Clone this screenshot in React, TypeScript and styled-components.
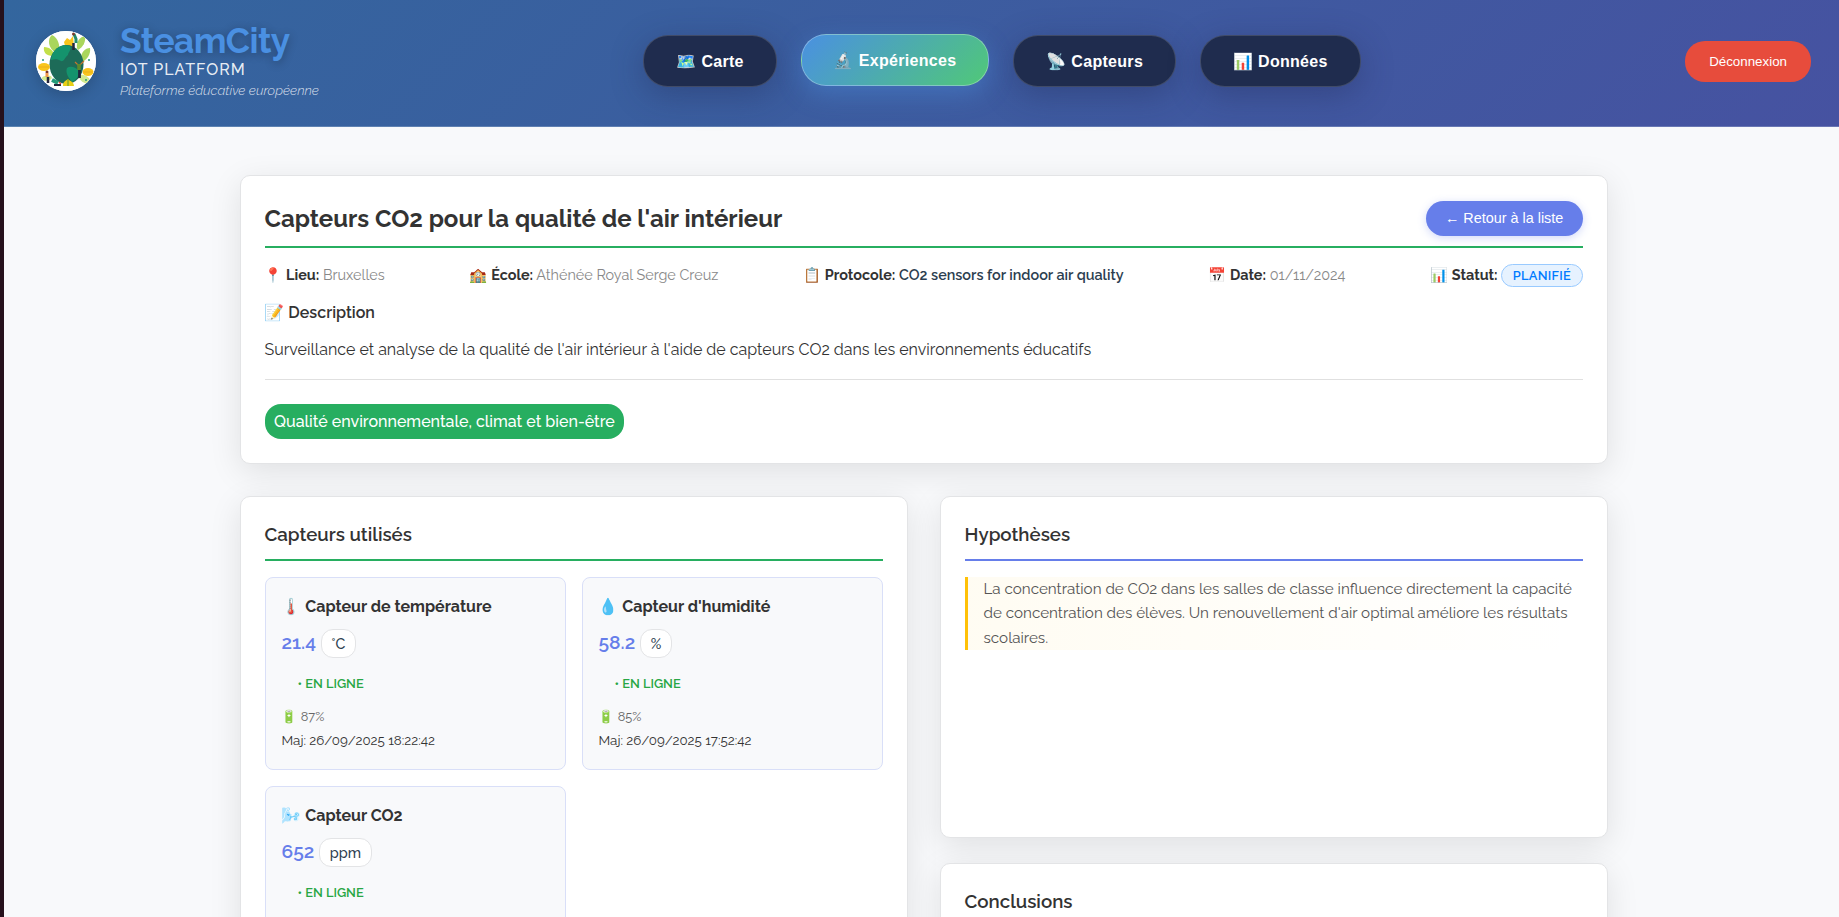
import React from 'react';
import styled, { createGlobalStyle, css } from 'styled-components';

const brandFont = "Raleway, Lato, 'Noto Color Emoji', sans-serif";
const uiFont = "'Liberation Sans', Arial, 'Noto Color Emoji', sans-serif";

const GlobalStyle = createGlobalStyle`
  *, *::before, *::after { box-sizing: border-box; }
  html, body { margin: 0; height: 100%; overflow: hidden; }
  body { font-family: ${brandFont}; font-size: 16px; line-height: 1.6; color: #333; background: #f8f9fa; }
  h1, h2, h3, h4, p { margin: 0; }
`;

const Frame = styled.div`
  display: flex;
  height: 917px;
  width: 100%;
  overflow: hidden;
`;

const EdgeStrip = styled.div`
  flex: 0 0 4px;
  background: #26111c;
`;

const Page = styled.div`
  flex: 0 0 1839px;
  background: #f8f9fb;
`;

const Header = styled.header`
  display: flex;
  align-items: center;
  justify-content: space-between;
  height: 127px;
  padding: 0 32px 4px;
  background: linear-gradient(135deg, #33669e 0%, #4652a1 100%);
  border-bottom: 1px solid rgba(255, 255, 255, 0.2);
`;

const Brand = styled.div`
  display: flex;
  align-items: center;
  gap: 24px;
`;

const LogoDisc = styled.div`
  width: 60px;
  height: 60px;
  border-radius: 50%;
  overflow: hidden;
  background: #fff;
  box-shadow: 0 4px 15px rgba(0, 0, 0, 0.2);

  svg { display: block; }
`;

const BrandText = styled.div`
  display: flex;
  flex-direction: column;
`;

const BrandName = styled.h1`
  padding-top: 1px;
  font-size: 35.2px;
  line-height: 38px;
  font-weight: 700;
  letter-spacing: -0.5px;
  color: #4a90e2;
  text-shadow: 0 2px 10px rgba(0, 0, 0, 0.3);
`;

const BrandSub = styled.span`
  font-size: 16px;
  line-height: 20px;
  font-weight: 500;
  letter-spacing: 1px;
  color: rgba(255, 255, 255, 0.9);
`;

const BrandTagline = styled.span`
  font-size: 13.333px;
  line-height: 21px;
  font-weight: 300;
  font-style: italic;
  color: rgba(255, 255, 255, 0.8);
`;

const Nav = styled.nav`
  display: flex;
  gap: 24px;
`;

const NavButton = styled.button<{ $active?: boolean }>`
  height: 52px;
  padding: 0 32px;
  border: 1px solid rgba(255, 255, 255, 0.15);
  border-radius: 25px;
  background: #1f2c4e;
  color: #fff;
  font: 700 16px ${uiFont};
  letter-spacing: 0.3px;
  box-shadow: 0 8px 32px rgba(31, 38, 80, 0.35);
  ${({ $active }) =>
    $active &&
    css`
      background: linear-gradient(135deg, #4a90e2, #50c878);
      border-color: rgba(255, 255, 255, 0.3);
      box-shadow: 0 8px 25px rgba(74, 144, 226, 0.4);
      transform: translateY(-1px);
    `}
`;

const LogoutButton = styled.button`
  height: 41px;
  margin-top: 1px;
  padding: 0 24px;
  border: 0;
  border-radius: 20px;
  background: #e74c3c;
  color: #fff;
  font: 13.333px ${uiFont};
`;

const Content = styled.main`
  width: 1400px;
  margin: 0 auto;
  padding: 48px 16px 0;
  display: flex;
  flex-direction: column;
  gap: 32px;
`;

const Card = styled.section<{ $minHeight?: number }>`
  padding: 24px;
  min-height: ${({ $minHeight }) => ($minHeight ? `${$minHeight}px` : 'auto')};
  background: #fff;
  border: 1px solid #e3e4e6;
  border-radius: 10px;
  box-shadow: 0 8px 32px rgba(0, 0, 0, 0.1);
`;

const TitleRow = styled.div`
  display: flex;
  align-items: center;
  justify-content: space-between;
  padding-bottom: 8px;
  margin-bottom: 16px;
  border-bottom: 2px solid #27ae60;
`;

const Title = styled.h2`
  font-size: 24px;
  font-weight: 700;
`;

const BackButton = styled.button`
  height: 35px;
  margin-bottom: 2px;
  padding: 0 19.2px;
  border: 0;
  border-radius: 20px;
  background: #667eea;
  color: #fff;
  font: 14.4px ${uiFont};
  box-shadow: 0 2px 8px rgba(102, 126, 234, 0.3);
`;

const MetaRow = styled.div`
  display: flex;
  align-items: center;
  justify-content: space-between;
  height: 21px;
  margin-bottom: 15px;
  font-size: 14.4px;
`;

const MetaItem = styled.div`
  color: #888;

  strong { font-weight: 700; color: #333; }
`;

const ProtocolLink = styled.span`
  font-weight: 600;
  color: #2c3e50;
`;

const StatusBadge = styled.span`
  display: inline-block;
  padding: 0 10.4px;
  border: 1px solid #99caff;
  border-radius: 12px;
  background: #e6f2ff;
  color: #007bff;
  font-size: 12.8px;
  line-height: 21px;
  font-weight: 600;
  letter-spacing: 0.3px;
`;

const DescriptionHeading = styled.h4`
  font-size: 16px;
  font-weight: 600;
  margin-bottom: 11px;
`;

const Description = styled.p`
  padding-bottom: 16px;
  margin-bottom: 24px;
  border-bottom: 1px solid #e0e0e0;
`;

const ThemeTag = styled.span`
  display: block;
  width: fit-content;
  padding: 5.4px 9.6px 4.2px;
  border-radius: 16px;
  background: #27ae60;
  color: #fff;
  font-weight: 500;
`;

const Columns = styled.div`
  display: grid;
  grid-template-columns: 1fr 1fr;
  gap: 32px;
`;

const SideColumn = styled.div`
  display: flex;
  flex-direction: column;
  gap: 25px;
`;

const SectionTitle = styled.h3<{ $line: string }>`
  padding-bottom: 12px;
  margin-bottom: 16px;
  border-bottom: 2px solid ${({ $line }) => $line};
  font-size: 18.72px;
  line-height: 26px;
  font-weight: 600;
`;

const SensorGrid = styled.div`
  display: grid;
  grid-template-columns: 1fr 1fr;
  gap: 16px;
`;

const SensorCard = styled.article`
  height: 193px;
  padding: 16px;
  border: 1px solid #d9dff8;
  border-radius: 8px;
  background: #f8f9fb;
`;

const SensorName = styled.h4`
  font-size: 16px;
  font-weight: 700;
  margin-bottom: 10px;
`;

const Reading = styled.div`
  display: flex;
  align-items: center;
  gap: 5px;
  height: 29px;
  margin-bottom: 16px;
`;

const ReadingValue = styled.span`
  padding-bottom: 4px;
  font-size: 19.2px;
  line-height: 26px;
  font-weight: 600;
  color: #667eea;
`;

const Unit = styled.span`
  height: 29px;
  padding: 0 9.6px;
  border: 1px solid #e3e4e6;
  border-radius: 12px;
  background: #fff;
  color: #2c3e50;
  font-size: 14.4px;
  line-height: 27px;
  font-weight: 500;
`;

const Online = styled.div`
  padding-left: 16px;
  margin-bottom: 12.5px;
  font-size: 12.8px;
  font-weight: 600;
  color: #28a745;
`;

const Battery = styled.div`
  margin-bottom: 2px;
  font-size: 12.8px;
  color: #666;
`;

const Updated = styled.div`
  font-size: 13.333px;
  color: #333;
`;

const Quote = styled.p`
  padding-left: 16px;
  border-left: 3px solid #ffc107;
  background: linear-gradient(90deg, rgba(255, 193, 7, 0.05), rgba(255, 193, 7, 0));
  font-size: 15.2px;
  line-height: 24.5px;
  color: #555;
`;

const sensors = [
  { icon: '🌡️', name: 'Capteur de température', value: '21.4', unit: '°C', battery: '87%', updated: '26/09/2025 18:22:42' },
  { icon: '💧', name: "Capteur d'humidité", value: '58.2', unit: '%', battery: '85%', updated: '26/09/2025 17:52:42' },
  { icon: '🌬️', name: 'Capteur CO2', value: '652', unit: 'ppm' },
];

const Logo = () => (
  <svg width="60" height="60" viewBox="0 0 60 60">
    <rect width="60" height="60" fill="#fff" />
    <g fill="#a9d65c">
      <path d="M20 22C12 17 11 8 16 4C22 7 25 15 22 21Z" />
      <path d="M17 25C10 25 7 21 8 16C14 16 18 20 18 25Z" fill="#c3e04a" />
      <path d="M41 17C40 10 44 6 49 5C50 11 47 16 42 19Z" />
      <path d="M45 28C45 21 49 17 54 17C55 23 51 29 46 31Z" />
      <path d="M44 44C50 43 54 47 55 52C49 54 44 50 43 46Z" fill="#d3ea8e" />
      <path d="M15 45C10 44 6 45 5 48C9 51 14 50 16 47Z" fill="#d3ea8e" />
    </g>
    <path d="M28 11L31 7L34 9L37 5L38 16L29 15Z" fill="#f8c51c" />
    <ellipse cx="30.500" cy="33.500" rx="17" ry="19.500" fill="#1d6b58" />
    <path d="M17 22C21 15 28 13 34 15C36 19 32 21 32 24C29 26 28 31 25 30C22 28 19 28 15 29C15 26 16 24 17 22Z" fill="#14936d" />
    <path d="M31 37C35 34 40 37 44 40C43 45 40 49 36 51C33 47 29 42 31 37Z" fill="#14936d" />
    <ellipse cx="8" cy="36" rx="6" ry="4" fill="#f9c51d" />
    <ellipse cx="52" cy="41" rx="5.500" ry="4" fill="#f9c51d" />
    <path d="M3 36H13M47 41H57" stroke="#e9a91a" strokeWidth="0.800" />
    <path d="M27 55C27 51 29 50 32 48C34 50 38 51 38 55Z" fill="#e9cf16" />
    <path d="M32 48V55" stroke="#5d9c2a" />
    <path d="M38 3L40 8V12" stroke="#238b6b" strokeWidth="3" fill="none" />
    <path d="M37.500 12V19" stroke="#23263d" strokeWidth="2.500" />
    <circle cx="37.500" cy="3" r="1.500" fill="#7c3a2b" />
    <path d="M39 31L43 35L48 30" stroke="#c9732f" strokeWidth="1.200" fill="none" />
    <path d="M43 33V39" stroke="#5c8b2c" strokeWidth="3.500" />
    <path d="M43.500 39V47" stroke="#23263d" strokeWidth="2.800" />
    <circle cx="11" cy="41" r="1.500" fill="#7c3a2b" />
    <path d="M11 42V46" stroke="#f19a4b" strokeWidth="3" />
    <path d="M12 46V52" stroke="#23263d" strokeWidth="2.500" />
    <path d="M16 49L22 52" stroke="#239a78" strokeWidth="4" />
    <path d="M18 54H25" stroke="#23263d" strokeWidth="2" />
    <path d="M23 51L25 53" stroke="#e74c3c" strokeWidth="1.500" />
    <g fill="#239a78">
      <circle cx="7" cy="29" r="1" />
      <circle cx="53" cy="29" r="1" />
      <circle cx="50" cy="49" r="1" />
    </g>
  </svg>
);

export default function App() {
  return (
    <>
      <GlobalStyle />
      <Frame>
        <EdgeStrip />
        <Page>
          <Header>
            <Brand>
              <LogoDisc><Logo /></LogoDisc>
              <BrandText>
                <BrandName>SteamCity</BrandName>
                <BrandSub>IOT PLATFORM</BrandSub>
                <BrandTagline>Plateforme éducative européenne</BrandTagline>
              </BrandText>
            </Brand>
            <Nav>
              <NavButton>🗺️ Carte</NavButton>
              <NavButton $active>🔬 Expériences</NavButton>
              <NavButton>📡 Capteurs</NavButton>
              <NavButton>📊 Données</NavButton>
            </Nav>
            <LogoutButton>Déconnexion</LogoutButton>
          </Header>
          <Content>
            <Card>
              <TitleRow>
                <Title>Capteurs CO2 pour la qualité de l'air intérieur</Title>
                <BackButton>← Retour à la liste</BackButton>
              </TitleRow>
              <MetaRow>
                <MetaItem>📍 <strong>Lieu:</strong> Bruxelles</MetaItem>
                <MetaItem>🏫 <strong>École:</strong> Athénée Royal Serge Creuz</MetaItem>
                <MetaItem>📋 <strong>Protocole:</strong> <ProtocolLink>CO2 sensors for indoor air quality</ProtocolLink></MetaItem>
                <MetaItem>📅 <strong>Date:</strong> 01/11/2024</MetaItem>
                <MetaItem>📊 <strong>Statut:</strong> <StatusBadge>PLANIFIÉ</StatusBadge></MetaItem>
              </MetaRow>
              <DescriptionHeading>📝 Description</DescriptionHeading>
              <Description>
                Surveillance et analyse de la qualité de l'air intérieur à l'aide de capteurs CO2 dans les environnements éducatifs
              </Description>
              <ThemeTag>Qualité environnementale, climat et bien-être</ThemeTag>
            </Card>
            <Columns>
              <Card>
                <SectionTitle $line="#27ae60">Capteurs utilisés</SectionTitle>
                <SensorGrid>
                  {sensors.map((s) => (
                    <SensorCard key={s.name}>
                      <SensorName>{s.icon} {s.name}</SensorName>
                      <Reading>
                        <ReadingValue>{s.value}</ReadingValue>
                        <Unit>{s.unit}</Unit>
                      </Reading>
                      <Online>• EN LIGNE</Online>
                      {s.battery && <Battery>🔋 {s.battery}</Battery>}
                      {s.updated && <Updated>Maj: {s.updated}</Updated>}
                    </SensorCard>
                  ))}
                </SensorGrid>
              </Card>
              <SideColumn>
                <Card $minHeight={342}>
                  <SectionTitle $line="#667eea">Hypothèses</SectionTitle>
                  <Quote>
                    La concentration de CO2 dans les salles de classe influence directement la capacité de concentration
                    des élèves. Un renouvellement d'air optimal améliore les résultats scolaires.
                  </Quote>
                </Card>
                <Card $minHeight={342}>
                  <SectionTitle $line="#667eea">Conclusions</SectionTitle>
                </Card>
              </SideColumn>
            </Columns>
          </Content>
        </Page>
      </Frame>
    </>
  );
}
